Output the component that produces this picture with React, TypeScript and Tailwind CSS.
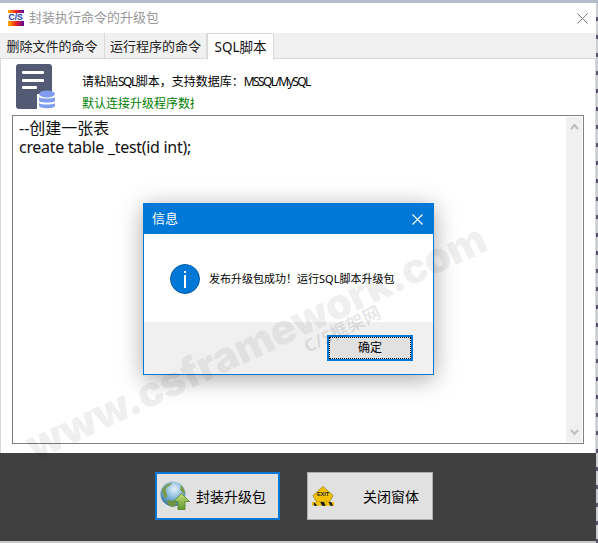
import React from 'react';

const cjk = { fontFamily: '"Noto Sans", "Noto Sans CJK SC", sans-serif' };

const ScriptIcon = () => (
  <svg width="41" height="46" viewBox="0 0 41 46" className="block">
    <rect x="0" y="0" width="36" height="45" rx="3" fill="#535a73" />
    <rect x="6" y="7" width="22" height="3" rx="1" fill="#fff" />
    <rect x="6" y="15" width="22" height="3" rx="1" fill="#fff" />
    <rect x="6" y="22" width="15" height="3" rx="1" fill="#fff" />
    <path d="M21 30h20v16H21z" fill="#fff" />
    <ellipse cx="31" cy="30" rx="8" ry="3.5" fill="#7f9cf0" />
    <path d="M23 33c1 2 15 2 16 0v4c-1 2-15 2-16 0z" fill="#7f9cf0" />
    <path d="M23 39c1 2 15 2 16 0v3c-1 3-15 3-16 0z" fill="#7f9cf0" />
  </svg>
);

const LogoIcon = () => (
  <svg width="17" height="17" viewBox="0 0 17 17" className="block">
    <defs>
      <linearGradient id="logoBar" x1="0" x2="1" y1="0" y2="0">
        <stop offset="0" stopColor="#ffb400" />
        <stop offset="0.5" stopColor="#f02020" />
        <stop offset="1" stopColor="#5a0aa0" />
      </linearGradient>
    </defs>
    <rect width="16" height="16" fill="url(#logoBar)" />
    <rect y="3" width="16" height="8" fill="#f4f4f8" />
    <text x="0.5" y="10" fontSize="8.5" fontWeight="700" fill="#1b3fa8" fontFamily="Liberation Sans">C/S</text>
  </svg>
);

const GlobeIcon = () => (
  <svg width="30" height="30" viewBox="0 0 30 30" className="block">
    <defs>
      <radialGradient id="globeSea" cx="0.55" cy="0.3" r="0.75">
        <stop offset="0" stopColor="#e6f3fb" />
        <stop offset="0.5" stopColor="#7fb4d8" />
        <stop offset="1" stopColor="#2f6b93" />
      </radialGradient>
      <linearGradient id="globeArrow" x1="0" x2="0" y1="0" y2="1">
        <stop offset="0" stopColor="#c5dc7a" />
        <stop offset="1" stopColor="#5f9a2c" />
      </linearGradient>
    </defs>
    <circle cx="13" cy="13" r="12.5" fill="url(#globeSea)" />
    <path d="M2 9c3-5 7-7 10-7-1 3-5 3-6 6s2 5 1 8-3 1-5-7z" fill="#7b9a4a" />
    <path d="M7 20c4-2 7 0 10 3l-4 3c-3 0-5-2-6-6z" fill="#6f9440" />
    <path d="M21 4c3 3 4 6 4 9-2 0-3-3-5-4z" fill="#7b9a4a" />
    <path d="M21.5 12.5l8 8h-4.500v8h-7v-8h-4.500z" fill="url(#globeArrow)" stroke="#4f7f25" strokeWidth="0.8" />
  </svg>
);

const ExitIcon = () => (
  <svg width="22" height="21" viewBox="0 0 24 22" className="block">
    <path d="M12 0l11 10-4 7H5L1 10z" fill="#f2c200" stroke="#7a6200" strokeWidth="0.6" />
    <text x="12" y="11" textAnchor="middle" fontSize="6" fontWeight="700" fill="#222" fontFamily="Liberation Sans">EXIT</text>
    <path d="M0 17h24v4H0z" fill="#f2c200" />
    <path d="M2 17l4 4H2zM9 17h4l2 4h-4zM18 17h3l2 4h-3z" fill="#1a1a1a" />
  </svg>
);

const Tab = ({ label, active }: { label: string; active?: boolean }) => (
  <div
    className={
      active
        ? 'h-[27px] w-[67px] -mb-px pt-[1px] bg-white border border-b-0 border-[#d9d9d9] flex items-center justify-center text-[13.5px] text-[#111]'
        : 'h-[25px] pt-[2px] flex items-center justify-center border-r border-[#d9d9d9] text-[13px] text-[#222]'
    }
  >
    {label}
  </div>
);

export default function App() {
  return (
    <div className="relative w-[598px] h-[543px] overflow-hidden bg-white flex flex-col" style={cjk}>
      <div className="h-[3px] bg-[#b4bccb] shrink-0" />

      <div className="h-[30px] shrink-0 flex items-center pl-2 pr-[10px] gap-[4px]">
        <LogoIcon />
        <span className="text-[13px] text-[#999]">封装执行命令的升级包</span>
        <svg width="11" height="11" viewBox="0 0 11 11" className="ml-auto">
          <path d="M.5.500l10 10M10.500.500l-10 10" stroke="#777" strokeWidth="1" />
        </svg>
      </div>

      <div className="h-[26px] shrink-0 bg-[#f0f0f0] border-b border-[#d9d9d9] flex mr-[2px]">
        <div className="w-[105px]"><Tab label="删除文件的命令" /></div>
        <div className="w-[102px]"><Tab label="运行程序的命令" /></div>
        <Tab label="SQL脚本" active />
      </div>

      <div className="flex-1 min-h-0 flex flex-col border-l border-r border-[#d9d9d9] mr-[2px]">
        <div className="h-[56px] shrink-0 flex pl-[15px] pt-[5px]">
          <ScriptIcon />
          <div className="ml-[25px] pt-[10px] flex flex-col gap-[6px]">
            <div className="text-[12px] leading-[16px] text-black whitespace-nowrap">
              请粘贴<span className="tracking-[-1.5px]">SQL</span>脚本，支持数据库：<span className="tracking-[-1.6px]">MSSQL/MySQL</span>
            </div>
            <div className="w-[112px] overflow-hidden text-[12px] leading-[16px] text-[#008000] whitespace-nowrap">默认连接升级程序数据库</div>
          </div>
        </div>

        <div className="h-[329px] shrink-0 mx-[11px] border border-[#808080] flex p-px">
          <div className="flex-1 pl-[5px] pt-[2px] text-[16px] leading-[19px] text-[#111]">
            <div>--创建一张表</div>
            <div className="tracking-[-0.3px]">create table _test(id int);</div>
          </div>
          <div className="w-[16px] bg-[#f0f0f0] flex flex-col items-center justify-between py-[6px]">
            <svg width="9" height="7" viewBox="0 0 9 7"><path d="M1 6l3.500-4 3.500 4" fill="none" stroke="#bdbdbd" strokeWidth="2" /></svg>
            <svg width="9" height="7" viewBox="0 0 9 7"><path d="M1 1l3.500 4 3.500-4" fill="none" stroke="#bdbdbd" strokeWidth="2" /></svg>
          </div>
        </div>
        <div className="h-[9px] shrink-0" />
      </div>

      <div className="h-[88px] shrink-0 bg-[#404040] mr-[2px] flex items-start pt-[19px] pl-[155px] gap-[27px]">
        <div className="w-[125px] h-[48px] bg-[#e1e1e1] border-[2px] border-[#0078d7] flex items-center pl-[3px] gap-[6px] text-[14px] text-black">
          <GlobeIcon />
          <span>封装升级包</span>
        </div>
        <div className="w-[126px] h-[48px] bg-[#e1e1e1] border border-[#adadad] flex items-center pl-[4px] text-[14px] text-black">
          <ExitIcon />
          <span className="ml-[29px]">关闭窗体</span>
        </div>
      </div>
      <div className="h-[2px] shrink-0 bg-[#c8c8c8]" />

      {/* right edge: what shows behind the window */}
      <div className="absolute top-[3px] bottom-0 right-0 w-[2px] bg-[repeating-linear-gradient(180deg,#c9cdd4_0px,#c9cdd4_14px,#5a5470_14px,#5a5470_18px)]" />

      {/* dialog */}
      <div className="absolute left-[143px] top-[203px] w-[291px] h-[172px] border border-[#0078d7] bg-white flex flex-col shadow-[0_4px_22px_rgba(0,0,0,0.35)]">
        <div className="h-[30px] shrink-0 bg-[#0078d7] flex items-center justify-between pl-2 pr-[10px] text-[13px] text-white">
          <span>信息</span>
          <svg width="11" height="11" viewBox="0 0 11 11"><path d="M.5.500l10 10M10.500.500l-10 10" stroke="#fff" strokeWidth="1.100" /></svg>
        </div>
        <div className="h-[88px] shrink-0 flex items-center pl-[26px] pt-[2px] gap-[9px]">
          <svg width="30" height="30" viewBox="0 0 30 30" className="block">
            <circle cx="15" cy="15" r="14.500" fill="#0078d7" stroke="#0a5a9c" strokeWidth="1" />
            <rect x="14" y="11" width="2" height="13" fill="#fff" />
            <rect x="14" y="7" width="2" height="2" fill="#fff" />
          </svg>
          <span className="text-[11px] text-black whitespace-nowrap">发布升级包成功！运行SQL脚本升级包</span>
        </div>
        <div className="flex-1 bg-[#f0f0f0] flex justify-end items-start pt-[13px] pr-[20px]">
          <div className="w-[86px] h-[26px] bg-[#e1e1e1] border-[2px] border-[#0078d7] flex items-center justify-center text-[12px] text-black outline-1 outline-dotted outline-black -outline-offset-3">
            确定
          </div>
        </div>
      </div>

      {/* watermark */}
      <div
        className="absolute left-[28px] top-[416px] origin-left -rotate-[25deg] text-[42px] font-black tracking-[-0.5px] text-black/[0.065] whitespace-nowrap pointer-events-none"
        style={{ fontFamily: 'Inter, sans-serif' }}
      >
        www.csframework.com
      </div>
      <div className="absolute left-[305px] top-[334px] origin-left -rotate-[26deg] text-[18px] font-bold text-black/[0.1] whitespace-nowrap pointer-events-none">
        C/S框架网
      </div>
    </div>
  );
}
